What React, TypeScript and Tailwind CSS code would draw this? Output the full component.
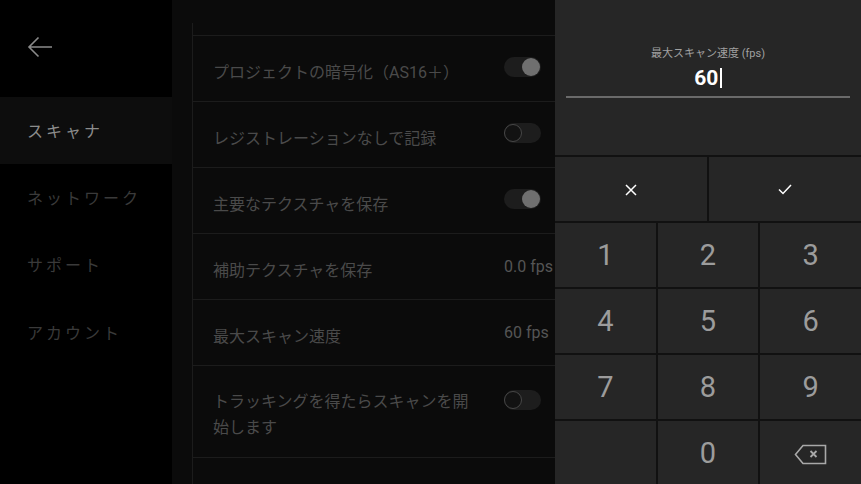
const FONT = "font-['Roboto','Noto_Sans_CJK_JP',sans-serif]";

function Toggle({ on }: { on: boolean }) {
  return (
    <div className="relative h-[20px] w-[37px] rounded-full bg-[#1d1d1d]">
      {on ? (
        <div className="absolute right-[1px] top-[1px] h-[18px] w-[18px] rounded-full bg-[#6f6f6f]" />
      ) : (
        <div className="absolute left-0 top-[1px] h-[18px] w-[18px] rounded-full border-[1.5px] border-[#474747] bg-[#121212]" />
      )}
    </div>
  );
}

function Row({
  label,
  toggle,
  value,
  tall,
}: {
  label: string;
  toggle?: boolean;
  value?: string;
  tall?: boolean;
}) {
  return (
    <div
      className={
        tall
          ? 'flex h-[92px] items-start border-t border-[#1c1c1c] pl-[20px] pt-[23px]'
          : 'flex h-[66px] items-center border-t border-[#1c1c1c] pl-[20px]'
      }
    >
      <div
        className={
          tall
            ? 'w-[291px] shrink-0 pr-[22px] text-[16px] leading-[26px] text-[#4a4a4a]'
            : 'w-[291px] shrink-0 pr-[22px] pt-[7px] text-[16px] leading-[25px] text-[#4a4a4a]'
        }
      >
        {label}
      </div>
      {toggle !== undefined && (
        <div className={tall ? 'pt-[1px]' : 'mb-[3px]'}>
          <Toggle on={toggle} />
        </div>
      )}
      {value && <div className="whitespace-nowrap text-[16px] text-[#555555]">{value}</div>}
    </div>
  );
}

function Key({ children }: { children?: React.ReactNode }) {
  return (
    <div className="flex items-center justify-center bg-[#262626] pt-[2px] text-[29px] text-[#9c9c9c]">{children}</div>
  );
}

export default function App() {
  const side = ['スキャナ', 'ネットワーク', 'サポート', 'アカウント'];

  return (
    <div className={`flex h-[484px] w-[861px] overflow-hidden bg-black ${FONT}`}>
      {/* Sidebar */}
      <aside className="w-[172px] shrink-0 bg-black">
        <div className="flex h-[97px] items-start pl-[27px] pt-[36px]">
          <svg width="26" height="22" viewBox="0 0 26 22" fill="none" stroke="#8a8a8a" strokeWidth="1.6">
            <path d="M25 11H2M11.5 1.5L2 11l9.5 9.5" />
          </svg>
        </div>
        {side.map((s, i) => (
          <div
            key={s}
            className={
              i === 0
                ? 'flex h-[67px] items-center bg-[#0d0d0d] pl-[27px] pt-[2px] text-[16px] tracking-[3px] text-[#8c8c8c]'
                : 'flex h-[67.5px] items-center pl-[27px] pt-[2px] text-[16px] tracking-[3px] text-[#3a3a3a]'
            }
          >
            {s}
          </div>
        ))}
      </aside>

      {/* Settings list */}
      <main className="min-w-0 flex-1 overflow-hidden bg-[#0b0b0b]">
        <div className="ml-[20px] mt-[23px] h-full w-[420px] border-l border-[#1c1c1c]">
          <div className="h-[12px]" />
          <Row label="プロジェクトの暗号化（AS16＋）" toggle={true} />
          <Row label="レジストレーションなしで記録" toggle={false} />
          <Row label="主要なテクスチャを保存" toggle={true} />
          <Row label="補助テクスチャを保存" value="0.0 fps" />
          <Row label="最大スキャン速度" value="60 fps" />
          <Row label="トラッキングを得たらスキャンを開始します" toggle={false} tall />
          <div className="border-t border-[#1c1c1c]" />
        </div>
      </main>

      {/* Number pad */}
      <section className="flex w-[306px] shrink-0 flex-col gap-[2px] bg-[#111111]">
        <div className="flex h-[155px] shrink-0 flex-col items-center bg-[#262626] px-[11px] pt-[46px]">
          <div className="text-[11px] leading-[16px] text-[#a0a0a0]">最大スキャン速度 (fps)</div>
          <div className="mt-[3px] flex items-center text-[21px] font-bold leading-[26px] text-white">
            60
            <span className="ml-[2px] inline-block h-[20px] w-[1.5px] bg-white" />
          </div>
          <div className="mt-[5px] h-[2px] w-full bg-[#6a6a6a]" />
        </div>

        <div className="grid h-[64px] shrink-0 grid-cols-2 gap-[2px]">
          <div className="flex items-center justify-center bg-[#262626] pt-[1px]">
            <svg width="12" height="12" viewBox="0 0 12 12" stroke="white" strokeWidth="1.5">
              <path d="M1 1l10 10M11 1L1 11" />
            </svg>
          </div>
          <div className="flex items-center justify-center bg-[#262626] pt-[1px]">
            <svg width="14" height="11" viewBox="0 0 14 11" fill="none" stroke="white" strokeWidth="1.5">
              <path d="M1 5.5l4 4L13 1" />
            </svg>
          </div>
        </div>

        <div className="grid flex-1 grid-cols-3 grid-rows-[64px_64px_64px_64px] gap-[2px]">
          {['1', '2', '3', '4', '5', '6', '7', '8', '9'].map((d) => (
            <Key key={d}>{d}</Key>
          ))}
          <Key />
          <Key>0</Key>
          <Key>
            <svg width="33" height="21" viewBox="0 0 33 21" fill="none" stroke="#a8a8a8" strokeWidth="1.6">
              <path d="M9 1.5H31.5V19.5H9L1.5 10.5Z" />
              <path d="M16.5 7l6 6M22.5 7l-6 6" strokeWidth="1.8" />
            </svg>
          </Key>
        </div>
      </section>
    </div>
  );
}
